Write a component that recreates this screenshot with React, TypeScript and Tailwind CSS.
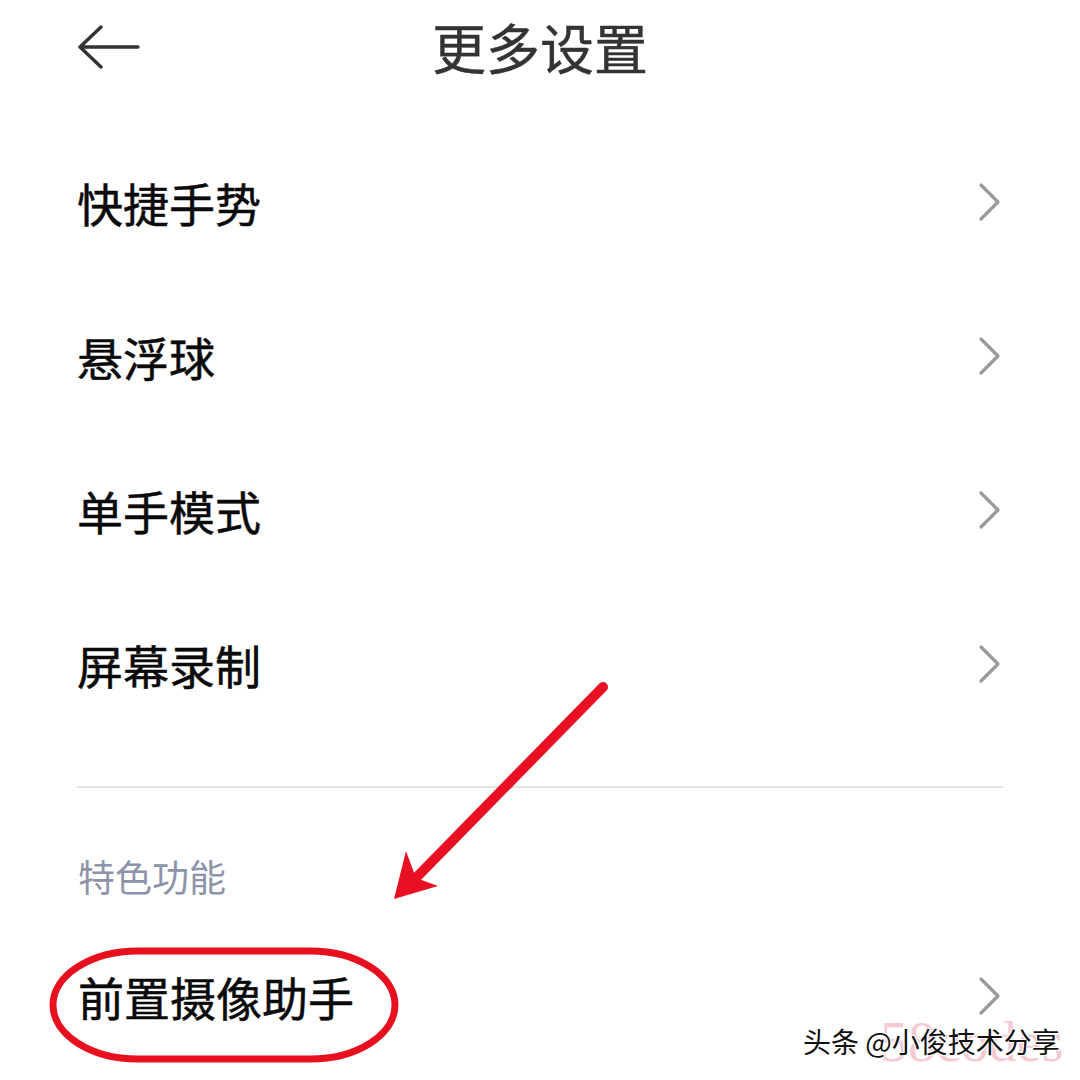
import React from "react";

const font = { fontFamily: '"Noto Sans CJK SC", "Noto Sans", sans-serif' };

function Chevron() {
  return (
    <svg width="24" height="40" viewBox="0 0 24 40" className="shrink-0">
      <path d="M3 3 L20 20 L3 37" fill="none" stroke="#9a9a9a" strokeWidth="3.2" strokeLinecap="round" strokeLinejoin="round" />
    </svg>
  );
}

function Row({ label }: { label: string }) {
  return (
    <div className="flex h-[154px] items-center justify-between pl-[77px] pr-[78px]">
      <span className="text-[46px] font-normal leading-none text-[#0a0a0a] [-webkit-text-stroke:0.5px_#0a0a0a]">{label}</span>
      <Chevron />
    </div>
  );
}

export default function App() {
  return (
    <div className="relative h-[1080px] w-[1080px] overflow-hidden bg-white" style={font}>
      <div className="relative flex h-[94px] items-center">
        <div className="pl-[78px]">
          <svg width="64" height="44" viewBox="0 0 64 44">
            <path d="M2 22 H60 M23 2 L2 22 L23 42" fill="none" stroke="#333333" strokeWidth="3.4" strokeLinecap="round" strokeLinejoin="round" />
          </svg>
        </div>
        <div className="absolute inset-x-0 top-0 flex h-[94px] items-center justify-center">
          <span className="text-[54px] font-normal leading-none text-[#333333] [-webkit-text-stroke:0.4px_#333333]">更多设置</span>
        </div>
      </div>
      <div className="pt-[31px]">
        <Row label="快捷手势" />
        <Row label="悬浮球" />
        <Row label="单手模式" />
        <Row label="屏幕录制" />
      </div>
      <div className="mx-[77px] mt-[45px] h-[2px] bg-[#e2e2e2]" />
      <div className="mt-[70px] flex h-[36px] items-center pl-[78px]">
        <span className="text-[37px] leading-none text-[#8d94aa]">特色功能</span>
      </div>
      <div className="mt-[79px] flex h-[46px] items-center justify-between pl-[78px] pr-[78px]">
        <span className="text-[46px] font-normal leading-none text-[#0a0a0a] [-webkit-text-stroke:0.5px_#0a0a0a]">前置摄像助手</span>
        <Chevron />
      </div>

      {/* red annotations */}
      <svg className="pointer-events-none absolute left-0 top-0" width="1080" height="1080" viewBox="0 0 1080 1080">
        <rect x="53" y="951" width="342" height="108" rx="85" ry="54" fill="none" stroke="#e8101f" strokeWidth="7" />
        <line x1="603" y1="687" x2="412" y2="882" stroke="#ea1024" strokeWidth="10" strokeLinecap="round" />
        <path d="M394 899 L406 851 L416 878 L438 886 Z" fill="#ea1024" />
      </svg>

      {/* watermark */}
      <div className="pointer-events-none absolute left-[880px] top-[1014px] text-[56px] leading-none text-[#f5cad3]" style={{ fontFamily: '"Liberation Serif", serif' }}>
        58codes
      </div>
      <div
        className="absolute left-[803px] top-[1027px] text-[28px] leading-none text-[#111111]"
        style={{ textShadow: "1px 1px 0 #fff, -1px -1px 0 #fff, 1px -1px 0 #fff, -1px 1px 0 #fff" }}
      >
        头条 @小俊技术分享
      </div>
    </div>
  );
}
